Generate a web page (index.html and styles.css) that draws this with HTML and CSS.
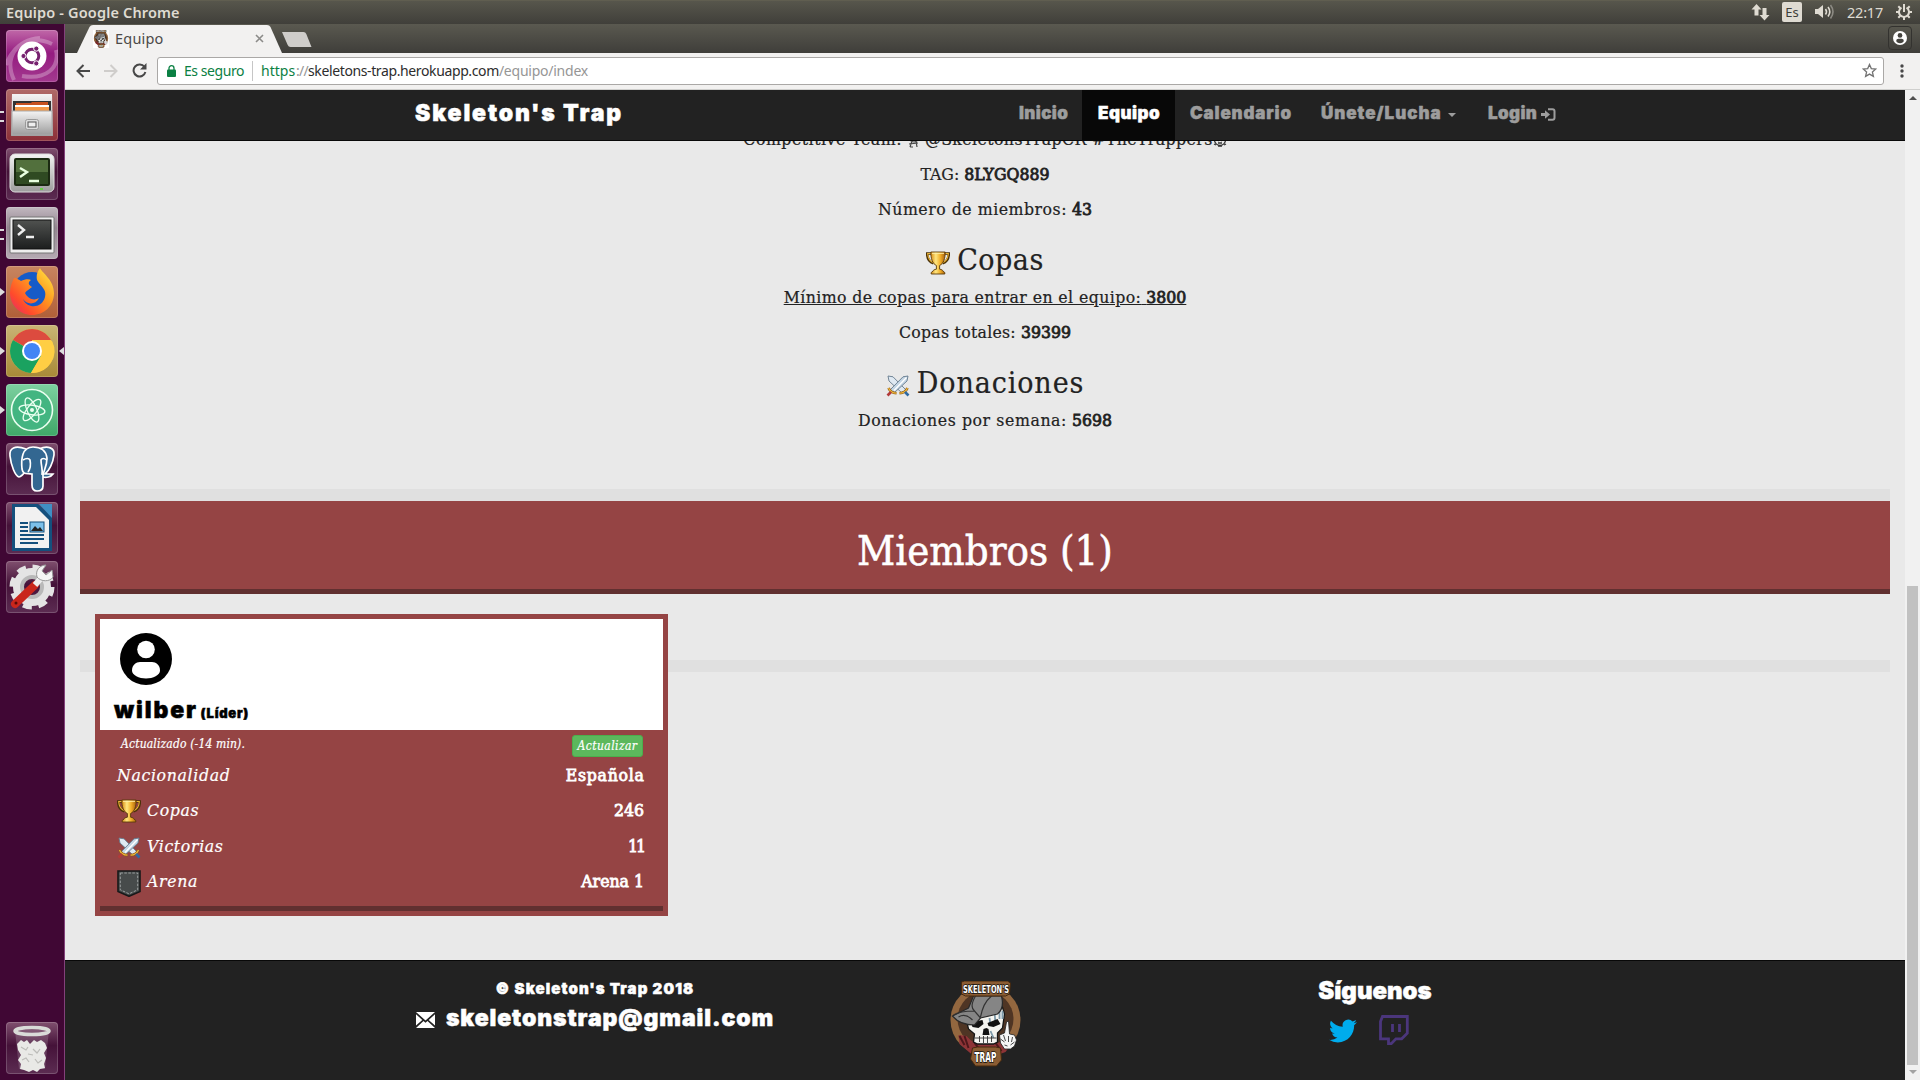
FILE: index.html
```html
<!DOCTYPE html>
<html lang="es">
<head>
<meta charset="utf-8">
<title>Equipo</title>
<link rel="stylesheet" href="styles.css">
</head>
<body>
<svg class="defs" aria-hidden="true">
  <defs>
    <linearGradient id="gold" x1="0" x2="1"><stop offset="0" stop-color="#d98a12"/><stop offset=".35" stop-color="#ffe680"/><stop offset=".65" stop-color="#f2b02a"/><stop offset="1" stop-color="#a8600c"/></linearGradient>
    <linearGradient id="steel" x1="0" y1="0" x2="0" y2="1"><stop offset="0" stop-color="#f4f4f4"/><stop offset="1" stop-color="#9c9c9c"/></linearGradient>
    <linearGradient id="fire" x1="1" y1="0" x2="0" y2="1"><stop offset="0" stop-color="#fff14a"/><stop offset=".4" stop-color="#ff9a1f"/><stop offset=".75" stop-color="#ff4a2c"/><stop offset="1" stop-color="#e0227a"/></linearGradient>
    <linearGradient id="dark" x1="0" y1="0" x2="0" y2="1"><stop offset="0" stop-color="#505250"/><stop offset="1" stop-color="#1c1e1e"/></linearGradient>
    <symbol id="trophy" viewBox="0 0 24 24">
      <path d="M5.500 2.500H1.200c0 5 2.600 8.600 6.300 9.800M18.500 2.500h4.300c0 5-2.600 8.600-6.300 9.800" fill="none" stroke="#4b3208" stroke-width="2.600"/>
      <path d="M5.500 2.500H1.700c.2 4.600 2.500 7.900 5.800 9.200M18.500 2.500h3.800c-.2 4.600-2.500 7.900-5.800 9.200" fill="none" stroke="#edb536" stroke-width="1.100"/>
      <path d="M4.800 1h14.400c0 6.500-1.500 11.500-5.600 13.500v3.700c2 .3 3.400 1 3.400 2l1.800 1.300V23H5.200v-1.500L7 20.200c0-1 1.400-1.700 3.400-2v-3.700C6.300 12.500 4.800 7.500 4.800 1z" fill="url(#gold)" stroke="#5a3b0a" stroke-width=".9"/>
      <path d="M6 2.300h12" stroke="#fff0a8" stroke-width="1"/>
    </symbol>
    <symbol id="swords" viewBox="0 0 24 22">
      <path d="M2 1l5 .8L20 15l-3.500 3.500L3 6z" fill="#dfe9f2" stroke="#64798c" stroke-width=".9"/>
      <path d="M22 1l-5 .8L4 15l3.500 3.500L21 6z" fill="#c3d5e4" stroke="#64798c" stroke-width=".9"/>
      <path d="M20.500 2.500L8 15.500" stroke="#fff" stroke-width="1.300"/>
      <path d="M2.500 13c1.500 3.500 4 5 8 5.200M21.500 13c-1.500 3.500-4 5-8 5.200" fill="none" stroke="#8a5a14" stroke-width="2.600"/>
      <path d="M2.500 13c1.500 3.500 4 5 8 5.200M21.500 13c-1.500 3.500-4 5-8 5.200" fill="none" stroke="#f0b63c" stroke-width="1.300"/>
      <path d="M5 17l-3.500 3.500" stroke="#b23a3a" stroke-width="2.600"/><path d="M19 17l3.500 3.500" stroke="#2f6aa3" stroke-width="2.600"/>
    </symbol>
    <symbol id="shield" viewBox="0 0 24 27">
      <path d="M1 1h22v20.500L12 26.300 1 21.500z" fill="#474b4b" stroke="#17191a" stroke-width="1.600"/>
      <path d="M3.300 3h17.400v16.800L12 23.800l-8.700-4z" fill="none" stroke="#a4a8a8" stroke-width=".9" stroke-dasharray="2.600 1.400"/>
    </symbol>
    <symbol id="person" viewBox="0 0 52 52">
      <circle cx="26" cy="26" r="26" fill="currentColor"/><ellipse cx="26" cy="16.500" rx="8.800" ry="8.800" fill="var(--cut)"/><path d="M12 37.500C12 32 16 29 20 29h12c4 0 8 3 8 8.500 0 4.500-7 8-14 8s-14-3.500-14-8z" fill="var(--cut)"/>
    </symbol>
    <symbol id="skull" viewBox="0 0 70 86">
      <circle cx="35" cy="39" r="35" fill="#93673f"/><circle cx="35" cy="38" r="28" fill="#4f3524"/>
      <path d="M8 54l8 1 4 4 6 4h20l6-4 6 8-3 4-8 3H22L9 63z" fill="#8e3437"/>
      <path d="M9 55l5 9M14 55l4 12M24 62l4 5M45 62l6 8" stroke="#4d171b" stroke-width="2"/>
      <path d="M17 44L27 35l24-12 3 10-2 14-5 5v9l-4 2H27l-4-2 1-8-6-5z" fill="#f4f4f0" stroke="#151515" stroke-width="1.300"/>
      <path d="M39 37l1 7M44 30l1 14M49 26v12M52 30v8M40 50l3 7" stroke="#7e9bab" stroke-width="1.800"/>
      <path d="M20 41l12-2 1 4-5 4-6-1zM37 42l10-4 3 5-7 3-5-1zM33 48l3-1 2 1 1 6h-7z" fill="#111"/>
      <path d="M24 57h22M29 55v6M33 55v7M37 55v7M41 55v6" stroke="#333" stroke-width=".9"/>
      <path d="M2 35l16-8 5-12h28c2 8 1 14-4 18l-17 4-6 7c-8 0-17-3-22-9z" fill="#858585" stroke="#292929" stroke-width="1.200"/>
      <path d="M25 15c-4 7-5 12-1 15l6 7M41 15c-7 6-9 12-11 21M3 34c6-4 14-4 21-4M8 36c5-3 9-2 14 3" fill="none" stroke="#333" stroke-width="1.200"/>
      <path d="M56 41l2-1 1 13 5 1 2 5-2 6-4 3h-6l-4-6-1-8 5-2z" fill="#f5f5f5" stroke="#222" stroke-width=".8"/>
      <path d="M50 58l4 3M53 54l2 6M58 55v6M62 56l-1 5M54 64l3 1M60 64l4-3" stroke="#333" stroke-width=".9"/>
      <path d="M11 1l3-1h43l3 2-1 11-4 2H15l-4-2zM22 67l5-1h18l5 1 1 12-5 6H25l-5-7z" fill="#8a5c33" stroke="#45290f"/>
      <text x="35.500" y="11.500" class="logo-name" textLength="46" lengthAdjust="spacingAndGlyphs">SKELETON'S</text>
      <text x="35" y="81" class="logo-word" textLength="22" lengthAdjust="spacingAndGlyphs">TRAP</text>
    </symbol>
  </defs>
</svg>

<div class="desktop">
  <header class="topbar">
    <span class="window-title">Equipo - Google Chrome</span>
    <div class="tray">
      <svg width="20" height="18" viewBox="0 0 20 18" fill="#dfdbd2"><path d="M5.500 1l5 5.500H7.500v6h-4v-6H.5zM13.500 17.500l5-5.500h-3V5h-4v7h-3z"/></svg>
      <span class="lang">Es</span>
      <svg width="20" height="18" viewBox="0 0 20 18"><path d="M0 6h3l5-4v13l-5-4H0z" fill="#dfdbd2"/><path d="M10.500 6q2 2.800 0 5.500M13 4q3.500 4.700 0 9.500" fill="none" stroke="#dfdbd2" stroke-width="1.600"/><path d="M15.500 2q5 6.700 0 13.500" fill="none" stroke="#8c8a83" stroke-width="1.600"/></svg>
      <span class="clock">22:17</span>
      <svg width="16" height="16" viewBox="0 0 16 16" fill="none" stroke="#dfdbd2"><path d="M5.500 3.600a5 5 0 1 0 5 0" stroke-width="2"/><path d="M8 0v8" stroke-width="2"/><path d="M0 8h3M13 8h3M2.300 2.300l2 2M13.700 2.300l-2 2M2.300 13.700l2-2M13.700 13.700l-2-2M8 13v3" stroke-width="2"/></svg>
    </div>
  </header>

  <div class="workspace">
    <nav class="launcher">
      <div class="tile t-ubuntu"><svg viewBox="0 0 52 52"><path d="M0 35C8 14 24 4 46 14M8 50C-2 28 10 10 34 8M50 20c4 18-10 30-34 26" fill="none" stroke="#fff" stroke-opacity=".28" stroke-width="4"/><circle cx="21" cy="26" r="0"/><circle cx="21.500" cy="26" r="0"/><circle cx="26" cy="26" r="14.500" fill="#fff"/><circle cx="26" cy="26" r="6.800" fill="none" stroke="#77216f" stroke-width="3"/><g fill="#77216f" stroke="#fff" stroke-width="1"><circle cx="17.500" cy="26" r="2.600"/><circle cx="30.300" cy="18.600" r="2.600"/><circle cx="30.300" cy="33.400" r="2.600"/></g></svg></div>
      <div class="tile t-files pips"><svg viewBox="0 0 52 52"><path d="M6 5h40l1 42H5z" fill="url(#steel)"/><path d="M7 12h38v10H7z" fill="#333"/><path d="M10 14h15l1-1h16v4H10z" fill="#c7511f"/><path d="M9 16h34v2H9z" fill="#fff"/><path d="M9 18h34v4H9z" fill="#f39a4a"/><path d="M6 22h40v24H6z" fill="url(#steel)" stroke="#aaa"/><rect x="19.500" y="30.500" width="13" height="10" rx="2" fill="#ddd" stroke="#999"/><rect x="22" y="33" width="8" height="5" fill="#eee" stroke="#555"/></svg></div>
      <div class="tile"><svg viewBox="0 0 52 52"><rect x="4" y="6" width="44" height="38" rx="5" fill="url(#steel)" stroke="#ddd"/><rect x="8" y="10" width="36" height="28" rx="2" fill="#1b2a12"/><path d="M10 12h32v12H10z" fill="#52703d"/><path d="M10 24h32v12H10z" fill="#2f4a22"/><path d="M14 20l7 4-7 5M23 33h10" fill="none" stroke="#e8ffe0" stroke-width="2.400"/><path d="M34 41h3" stroke="#6c4" stroke-width="2"/></svg></div>
      <div class="tile t-grey pips"><svg viewBox="0 0 52 52"><rect x="4" y="10" width="44" height="36" rx="1" fill="#eee" stroke="#777"/><rect x="7" y="13" width="38" height="29" fill="url(#dark)" stroke="#111"/><path d="M12 18l6 5-6 5M20 30h8" fill="none" stroke="#eee" stroke-width="2.400"/></svg></div>
      <div class="tile t-fox pip"><svg viewBox="0 0 52 52"><circle cx="26" cy="25" r="19" fill="#165bc8"/><path d="M8 12c3 0 5 2 7 3 4-2 8-2 10-1-4 3-2 5 1 7-2 2-5 3-7 6 3 6 9 8 14 5-4 8-13 6-16 1 4 10 19 10 22-2 2-8-4-10-8-17-1-6 1-9 3-12 3 6 14 12 14 25 0 13-10 22-22 22S4 39 4 27c0-6 2-11 4-15z" fill="url(#fire)"/></svg></div>
      <div class="tile t-chrome pip focused"><svg viewBox="0 0 52 52"><circle cx="26" cy="26" r="22" fill="#ffce44"/><path d="M26 26L7 15a22 22 0 0 1 38 0H26z" fill="#dc4b3f"/><path d="M26 26L7 15a22 22 0 0 0 18 33l10-17z" fill="#1aa260"/><path d="M26 16h20a22 22 0 0 1-21 32l10-17z" fill="#ffce44"/><circle cx="26" cy="26" r="10" fill="#fff"/><circle cx="26" cy="26" r="8" fill="#4285f4"/></svg></div>
      <div class="tile t-atom pip"><svg viewBox="0 0 52 52"><circle cx="26" cy="26" r="20.500" fill="#43b581" stroke="#eafff0" stroke-width="1.600"/><g fill="none" stroke="#eafff0" stroke-width="1.300"><ellipse cx="26" cy="26" rx="13" ry="4.800" transform="rotate(8 26 26)"/><ellipse cx="26" cy="26" rx="13" ry="4.800" transform="rotate(66 26 26)"/><ellipse cx="26" cy="26" rx="13" ry="4.800" transform="rotate(-52 26 26)"/></g><circle cx="26" cy="26" r="2" fill="#eafff0"/></svg></div>
      <div class="tile"><svg viewBox="0 0 52 52"><g fill="#336791" stroke="#fff" stroke-width="1.700"><path d="M20 6C9 2 3 5 4 13c1 9 5 20 9 21 3 0 6-5 8-8M33 6c9-4 16-1 15 6-1 8-5 16-9 19h8c-2 3-7 4-10 3"/><path d="M27 4c8 0 13 4 14 11 0 8-3 12-4 17v11c0 3-2 5-6 5s-5-2-5-6V31c-5-1-9 1-10-5-1-10 0-22 11-22z"/><path d="M17 17c3-2 6-2 7 0 1 5 1 8-2 12M41 17c-3-2-5-2-6 0 0 6 2 9 1 15" fill="none"/></g></svg></div>
      <div class="tile"><svg viewBox="0 0 52 52"><path d="M6 2h26l14 13v34H6z" fill="#14507d"/><path d="M9 5h21l13 13v28H9z" fill="#f1f1f1"/><path d="M33 2h13v14z" fill="#3f8fc4"/><path d="M14 21h8M14 25h8M14 29h8M14 33h24M14 37h24M14 41h18" stroke="#14507d" stroke-width="2"/><rect x="24" y="20" width="14" height="10" fill="#7cc0ea" stroke="#14507d"/><path d="M25 29l4-5 3 3 2-2 3 4z" fill="#222"/></svg></div>
      <div class="tile"><svg viewBox="0 0 52 52"><circle cx="26" cy="26" r="15" fill="none" stroke="#e4e4e4" stroke-width="8"/><circle cx="26" cy="26" r="20" fill="none" stroke="#e4e4e4" stroke-width="5" stroke-dasharray="9 6.700"/><circle cx="26" cy="26" r="10" fill="none" stroke="#b9b9b9" stroke-width="4"/><path d="M9 43l20-19" stroke="#c9261c" stroke-width="8" stroke-linecap="round"/><path d="M29 24l7-8" stroke="#eee" stroke-width="6"/><path d="M46 9l-6 5-4-4 4-6c-6 0-11 5-9 12 4 5 13 5 16 0z" fill="#f5f5f5" stroke="#999"/><circle cx="10" cy="42" r="1.500" fill="#5a0a06"/></svg></div>
      <div class="tile trash"><svg viewBox="0 0 52 52"><path d="M9 8h34l-4 39H13z" fill="#fff" fill-opacity=".16"/><path d="M11 22l4-4 3 2 3-2 3 4 4-4 3 2 4-2 4 3 2 5-3 5 2 5-2 6 1 4-5 1-3 3-4-2-4 2-5-2-4-1 1-5-3-4 3-5-3-5z" fill="#e9e9e6"/><path d="M15 25l5 3 2-3M27 27l4 4 3-4M16 38l4-2 3 4M29 37l3 4 4-3M22 32l5 1" fill="none" stroke="#bcbcb8" stroke-width="1.200"/><ellipse cx="26" cy="9" rx="17" ry="3.500" fill="none" stroke="#d9dbd8" stroke-width="3.500"/></svg></div>
    </nav>

    <section class="browser">
      <div class="tabstrip">
        <svg class="tabs-shape" width="260" height="29" viewBox="0 0 260 29"><path d="M12 29L24.500 3Q25.500 1 28 1h174q2.500 0 3.500 2l11.500 26z" fill="#f2f1f0"/><path d="M217 8h21.500q2 0 2.800 2l5.200 13h-21q-2 0-2.800-2z" fill="#cfcdca"/></svg>
        <div class="tab">
          <svg width="16" height="18" viewBox="0 0 70 86" class="favicon"><use href="#skull"/></svg>
          <span class="tab-title">Equipo</span>
          <svg width="9" height="9" viewBox="0 0 9 9" stroke="#8c8b89" stroke-width="1.600"><path d="M1 1l7 7M8 1L1 8"/></svg>
        </div>
        <span class="profile"><svg width="14" height="14"><use href="#person"/></svg></span>
      </div>
      <div class="toolbar">
        <svg width="14" height="14" viewBox="0 0 14 14" fill="none" stroke="#484848" stroke-width="2"><path d="M14 7H1.500M7.500 1l-6 6 6 6"/></svg>
        <svg width="14" height="14" viewBox="0 0 14 14" fill="none" stroke="#cfcdcb" stroke-width="2"><path d="M0 7h12.500M6.500 1l6 6-6 6"/></svg>
        <svg width="15" height="15" viewBox="0 0 15 15"><path d="M12.500 4A6 6 0 1 0 13.400 9" fill="none" stroke="#484848" stroke-width="2"/><path d="M14.500 0v6.500H8z" fill="#484848"/></svg>
        <div class="omnibox">
          <svg width="9" height="12" viewBox="0 0 9 12"><rect y="4.500" width="9" height="7.500" rx="1" fill="#0b8043"/><path d="M2 5V3.200a2.500 2.500 0 0 1 5 0V5" fill="none" stroke="#0b8043" stroke-width="1.300"/></svg>
          <span class="secure">Es seguro</span>
          <span class="url"><span class="scheme">https</span><span class="slashes">://</span><span class="host">skeletons-trap.herokuapp.com</span><span class="path">/equipo/index</span></span>
          <svg class="star" width="15" height="15" viewBox="0 0 15 15"><path d="M7.500 1.500l1.800 4.100 4.500.4-3.400 3 1 4.400-3.900-2.300-3.900 2.300 1-4.400-3.400-3 4.500-.4z" fill="none" stroke="#727272" stroke-width="1.300"/></svg>
        </div>
        <svg class="dots" width="4" height="14" viewBox="0 0 4 14" fill="#484848"><circle cx="2" cy="2" r="1.700"/><circle cx="2" cy="7" r="1.700"/><circle cx="2" cy="12" r="1.700"/></svg>
      </div>

      <div class="viewport">
        <div class="page">
          <nav class="navbar">
            <a class="brand">Skeleton's Trap</a>
            <a class="link inicio">Inicio</a>
            <a class="link active">Equipo</a>
            <a class="link calendario">Calendario</a>
            <a class="link unete">Únete/Lucha<i class="caret"></i></a>
            <a class="link login">Login<svg width="15" height="13" viewBox="0 0 15 13"><path d="M7 1.200h4.500q2 0 2 2v6.600q0 2-2 2H7" fill="none" stroke="#9d9d9d" stroke-width="2"/><path d="M0 5h4V2.200l5 4.300-5 4.300V8H0z" fill="#9d9d9d"/></svg></a>
          </nav>
          <main>
            <div class="team">
              <p><span class="s5">Competitive Team:</span> <svg class="glyph" width="13" height="18" viewBox="0 0 13 18" fill="none" stroke="#444" stroke-width="1.200"><path d="M1 2h11v5q-2 4-5 4T1 7zM5 10l-2 6M9 10l1 6M2 13l9-1M3 16h3"/></svg> <span class="s4">@SkeletonsTrapCR #TheTrappers</span><svg class="glyph" width="14" height="18" viewBox="0 0 14 18" fill="none" stroke="#333" stroke-width="1.300"><circle cx="7" cy="9" r="5.500"/><path d="M4 8l2 2M10 8l-2 2M5 12h4M1 13l2 1M13 13l-2 1M5 15h4"/></svg></p>
              <p>TAG: <b>8LYGQ889</b></p>
              <p><span class="s5">Número de miembros:</span> <b>43</b></p>
              <h2 class="copas"><svg width="24" height="24"><use href="#trophy"/></svg>Copas</h2>
              <p class="underlined"><span class="s4">Mínimo de copas para entrar en el equipo:</span> <b>3800</b></p>
              <p><span class="s3">Copas totales:</span> <b>39399</b></p>
              <h2 class="donaciones"><svg width="24" height="22"><use href="#swords"/></svg>Donaciones</h2>
              <p><span class="s6">Donaciones por semana:</span> <b>5698</b></p>
            </div>
            <div class="rule"></div>
            <h1 class="banner">Miembros (1)</h1>
            <div class="members">
              <article class="card">
                <header class="card-head">
                  <svg class="avatar" width="52" height="52"><use href="#person"/></svg>
                  <div class="name">wilber <small>(Líder)</small></div>
                </header>
                <div class="updated"><em>Actualizado (-14 min).</em><a class="btn">Actualizar</a></div>
                <div class="row"><em>Nacionalidad</em><b class="s7">Española</b></div>
                <div class="row"><em><svg width="24" height="24"><use href="#trophy"/></svg>Copas</em><b>246</b></div>
                <div class="row"><em><svg class="low" width="24" height="22"><use href="#swords"/></svg>Victorias</em><b class="eleven">11</b></div>
                <div class="row"><em><svg width="24" height="27"><use href="#shield"/></svg>Arena</em><b>Arena 1</b></div>
              </article>
            </div>
          </main>
          <footer class="footer">
            <div class="contact">
              <div class="copy">© Skeleton's Trap 2018</div>
              <div class="mail"><svg width="19" height="16" viewBox="0 0 19 16" fill="#fff"><path d="M0 0h19l-9.500 8.500zM0 2.200L6.300 8 0 13.500zM19 2.200L12.700 8l6.300 5.500zM7.500 9l2 1.800 2-1.800 7.500 7H0z"/></svg>skeletonstrap@gmail.com</div>
            </div>
            <svg class="logo" width="71" height="86"><use href="#skull"/></svg>
            <div class="follow">
              <div class="follow-title">Síguenos</div>
              <div class="social">
                <svg width="28" height="24" viewBox="0 2 24 20" fill="#00aced"><path d="M23.950 4.570a10 10 0 0 1-2.820.78 4.960 4.960 0 0 0 2.160-2.720c-.95.550-2 .95-3.130 1.180a4.920 4.920 0 0 0-8.380 4.480C7.690 8.090 4.070 6.130 1.640 3.160a4.820 4.820 0 0 0-.67 2.480c0 1.710.87 3.210 2.190 4.100a4.900 4.900 0 0 1-2.230-.62v.06a4.920 4.920 0 0 0 3.950 4.830 5 5 0 0 1-2.210.08 4.940 4.940 0 0 0 4.600 3.420A9.870 9.870 0 0 1 0 19.540a13.990 13.990 0 0 0 7.550 2.210c9.050 0 14-7.500 14-13.980 0-.21 0-.42-.02-.63a9.940 9.940 0 0 0 2.460-2.550z"/></svg>
                <svg width="30" height="31" viewBox="0 0 30 31"><path d="M3.500 1.500h24.800v16.700l-5.600 5.600h-5.800l-4.600 4.900H9.500v-4.900H1.500V6.500z" fill="none" stroke="#4b367c" stroke-width="2.800"/><path d="M13.500 9v8M20.500 9v8" stroke="#4b367c" stroke-width="2.800"/></svg>
              </div>
            </div>
          </footer>
        </div>
        <div class="scrollbar"><i class="up"></i><i class="thumb"></i><i class="down"></i></div>
      </div>
    </section>
  </div>
</div>
</body>
</html>
```
FILE: styles.css
```css
* { box-sizing: border-box; }
body { margin: 0; font-family: "Noto Sans", sans-serif; overflow: hidden; }
svg { display: block; flex: none; }
.defs { position: absolute; width: 0; height: 0; }
h1, h2, p { margin: 0; font-weight: 400; }
.desktop { width: 1920px; height: 1080px; display: flex; flex-direction: column; overflow: hidden; }

/* System bar */
.topbar { height: 24px; flex: none; display: flex; align-items: center; justify-content: space-between; padding: 0 8px 2px 6px; background: linear-gradient(#57564c, #403f3a); color: #dfdbd2; border-top: 1px solid #605e50; }
.window-title { font-size: 14.5px; font-weight: 600; letter-spacing: .15px; line-height: 22px; }
.tray { display: flex; align-items: center; }
.lang { width: 20px; height: 20px; margin: 0 13px 0 11px; border-radius: 2px; background: #dfdbd2; color: #3f3e3a; font-size: 13px; line-height: 20px; text-align: center; }
.clock { margin: 0 13px 0 12px; font-size: 14.5px; line-height: 22px; letter-spacing: -.2px; }

.workspace { flex: 1; display: flex; min-height: 0; }

/* Launcher */
.launcher { width: 65px; flex: none; display: flex; flex-direction: column; gap: 7px; padding: 6px 0 6px 6px; background: #400734; border-right: 1px solid #83417b; }
.tile { position: relative; width: 52px; height: 52px; border-radius: 4px; background: linear-gradient(#80506f, #451239 45%, #5c2c52); box-shadow: inset 0 0 0 1px rgba(255,255,255,.18); }
.tile svg { width: 52px; height: 52px; }
.t-ubuntu { background: linear-gradient(#c068a8, #951b80 45%, #a3398f); }
.t-files { background: linear-gradient(#b06a68, #8c3038); }
.t-grey { background: linear-gradient(#c2b8c0, #93858f 40%, #b5aab3); }
.t-fox { background: linear-gradient(#c88560, #b05f38); }
.t-chrome { background: linear-gradient(#c9b475, #a88a37); }
.t-atom { background: linear-gradient(#7dd0a0, #3fa868); }
.trash { margin-top: auto; }
.pip::before { content: ""; position: absolute; left: -6px; top: 22px; border: 4px solid transparent; border-left: 5px solid #ddd; border-right: 0; }
.pips::before { content: ""; position: absolute; left: -6px; top: 22px; width: 4px; height: 7px; border: solid #ddd; border-width: 2px 0; }
.focused::after { content: ""; position: absolute; right: -6px; top: 22px; border: 4px solid transparent; border-right: 5px solid #ddd; border-left: 0; }

/* Browser chrome */
.browser { flex: 1; display: flex; flex-direction: column; min-width: 0; }
.tabstrip { position: relative; height: 29px; flex: none; display: flex; align-items: center; justify-content: space-between; padding-right: 8px; background: linear-gradient(#5a5950, #3f3e3a); }
.tabs-shape { position: absolute; left: 0; top: 0; }
.tab { position: relative; display: flex; align-items: center; width: 200px; padding-left: 28px; }
.favicon { background: #fff; }
.tab-title { width: 140px; margin: 0 0 2px 6px; font-size: 14.5px; line-height: 20px; color: #4c4a48; letter-spacing: .2px; }
.profile { --cut: #45443f; color: #fff; width: 24px; height: 24px; display: grid; place-items: center; margin-bottom: 1px; border: 1px solid #33322f; border-radius: 4px; }
.toolbar { height: 37px; flex: none; display: flex; align-items: center; padding: 0 16px 1px 11px; background: #f2f1f0; border-bottom: 1px solid #cfcfcd; }
.toolbar > svg + svg { margin-left: 14px; }
.omnibox { flex: 1; height: 28px; display: flex; align-items: center; margin: 0 16px 0 10px; padding: 0 6px 0 9px; background: #fff; border: 1px solid #aaa8a6; border-radius: 3px; font-size: 14px; line-height: 20px; }
.toolbar > .dots { margin: 0; }
.secure { margin-left: 8px; padding-right: 8px; border-right: 1px solid #c6c6c6; color: #0b8043; letter-spacing: -.44px; }
.url { flex: 1; margin-left: 8px; color: #969696; display: flex; }
.scheme { color: #0b8043; width: 35px; }
.slashes { width: 12px; letter-spacing: -.8px; }
.host { color: #2d2d2d; letter-spacing: -.38px; }
.path { letter-spacing: -.24px; }

/* Page */
.viewport { flex: 1; display: flex; min-height: 0; }
.page { flex: 1; display: flex; flex-direction: column; background: #e9e9e9; font-family: "DejaVu Serif Condensed", "DejaVu Serif", serif; color: #222; }
main { -webkit-text-stroke: .2px currentColor; }
.navbar, .footer, .name { font-family: Inter, sans-serif; font-weight: 900; -webkit-text-stroke: .5px currentColor; }
.navbar { position: relative; z-index: 1; height: 51px; flex: none; display: grid; grid-template-columns: 589px 78px 93px 131px 167px 105px; padding-left: 350px; background: #222; border-bottom: 1px solid #080808; }
.brand { color: #fff; font-size: 23px; line-height: 46px; letter-spacing: 1.900px; white-space: nowrap; }
.link { display: flex; align-items: center; padding: 0 0 4px 15px; font-size: 17px; color: #9d9d9d; white-space: nowrap; letter-spacing: .4px; }
.active { padding-left: 16px; color: #fff; background: #080808; letter-spacing: .5px; }
.calendario { letter-spacing: .85px; }
.unete { letter-spacing: 1px; }
.caret { margin-left: 6px; margin-top: 4px; border: 4px solid transparent; border-top-color: #9d9d9d; border-bottom: 0; }
.login svg { margin: 2px 0 0 4px; }

main { height: 838px; flex: none; padding: 0 15px; margin-top: -19px; }
.team { height: 367px; text-align: center; font-size: 17.5px; }
.team p { height: 35px; line-height: 35px; white-space: nowrap; }
.team b, .row b { font-weight: 400; -webkit-text-stroke: .8px currentColor; }
.glyph { display: inline-block; vertical-align: -4px; }
.s3 { letter-spacing: .26px; }
.s4 { letter-spacing: .41px; }
.s5 { letter-spacing: .52px; }
.s6 { letter-spacing: .59px; }
.s7 { letter-spacing: .74px; margin-right: -.7px; }
.underlined { text-decoration: underline; }
.team h2 { height: 53px; display: flex; justify-content: center; align-items: center; gap: 7px; padding-top: 13px; font-size: 30px; line-height: 40px; letter-spacing: .5px; }
.team h2 svg { margin-top: 5px; }
.team .donaciones { letter-spacing: .9px; }
.rule { height: 12px; background: #e0e0e0; }
.banner { height: 93px; border-bottom: 5px solid #613030; background: #954444; color: #fff; text-align: center; font-size: 41.500px; line-height: 99px; -webkit-text-stroke: .5px currentColor; }
.members { padding: 20px 15px 0; background: linear-gradient(#e0e0e0, #e0e0e0) 0 66px / 100% 12px no-repeat; }
.card { width: 573px; height: 302px; border: 5px solid #954444; background: linear-gradient(#613030, #613030) bottom / 100% 5px no-repeat #954444; color: #fff; }
.card-head { height: 111px; padding: 14px 14px 0; background: #fff; color: #000; --cut: #fff; }
.avatar { margin-left: 6px; }
.name { margin-top: 8px; font-size: 23px; line-height: 34px; letter-spacing: 1.900px; white-space: nowrap; }
.name small { font-size: 13px; margin-left: -4px; letter-spacing: .7px; }
.updated { height: 30px; display: flex; justify-content: space-between; align-items: flex-start; padding: 5px 20px 0 21px; font-size: 12px; font-style: italic; }
.updated em { line-height: 18px; letter-spacing: .15px; }
.btn { width: 71px; height: 22px; border: 1px solid #4cae4c; border-radius: 3px; background: #5cb85c; line-height: 20px; text-align: center; letter-spacing: .4px; }
.row { height: 35.300px; display: flex; justify-content: space-between; padding: 0 19px 0 17px; font-size: 17.500px; line-height: 30px; }
.row em { display: flex; gap: 6px; letter-spacing: .65px; }
.row em svg { margin-top: 4px; }
.row em .low { margin-top: 6px; }
.eleven { letter-spacing: -2px; }

.footer { height: 120px; flex: none; display: grid; grid-template-columns: repeat(3, 390px); justify-content: center; justify-items: center; background: #222; border-top: 1px solid #080808; color: #fff; white-space: nowrap; }
.contact, .follow { display: flex; flex-direction: column; align-items: center; }
.copy { margin-top: 17px; font-size: 15px; line-height: 22px; letter-spacing: 1.120px; }
.mail { display: flex; align-items: center; gap: 11px; font-size: 23px; line-height: 36px; letter-spacing: .9px; }
.mail svg { margin-top: 3px; }
.logo { margin-top: 20px; }
.logo-name, .logo-word { font-family: "DejaVu Sans Condensed", sans-serif; font-weight: 700; font-size: 11px; fill: #fff; text-anchor: middle; stroke: #111; stroke-width: 1.500px; paint-order: stroke; }
.logo-word { font-size: 14px; }
.follow-title { margin-top: 13px; font-size: 24px; line-height: 34px; }
.social { display: flex; align-items: center; gap: 22px; margin-top: 7px; margin-left: -13px; }

/* Scrollbar */
.scrollbar { width: 15px; flex: none; background: #f1f1f1; display: flex; flex-direction: column; align-items: center; padding: 6px 0; }
.up { border: 4px solid transparent; border-top: 0; border-bottom-color: #505050; }
.thumb { width: 11px; height: 479px; margin-top: auto; background: #c1c1c1; }
.down { margin-top: 5px; border: 4px solid transparent; border-bottom: 0; border-top-color: #a3a3a3; }
```
